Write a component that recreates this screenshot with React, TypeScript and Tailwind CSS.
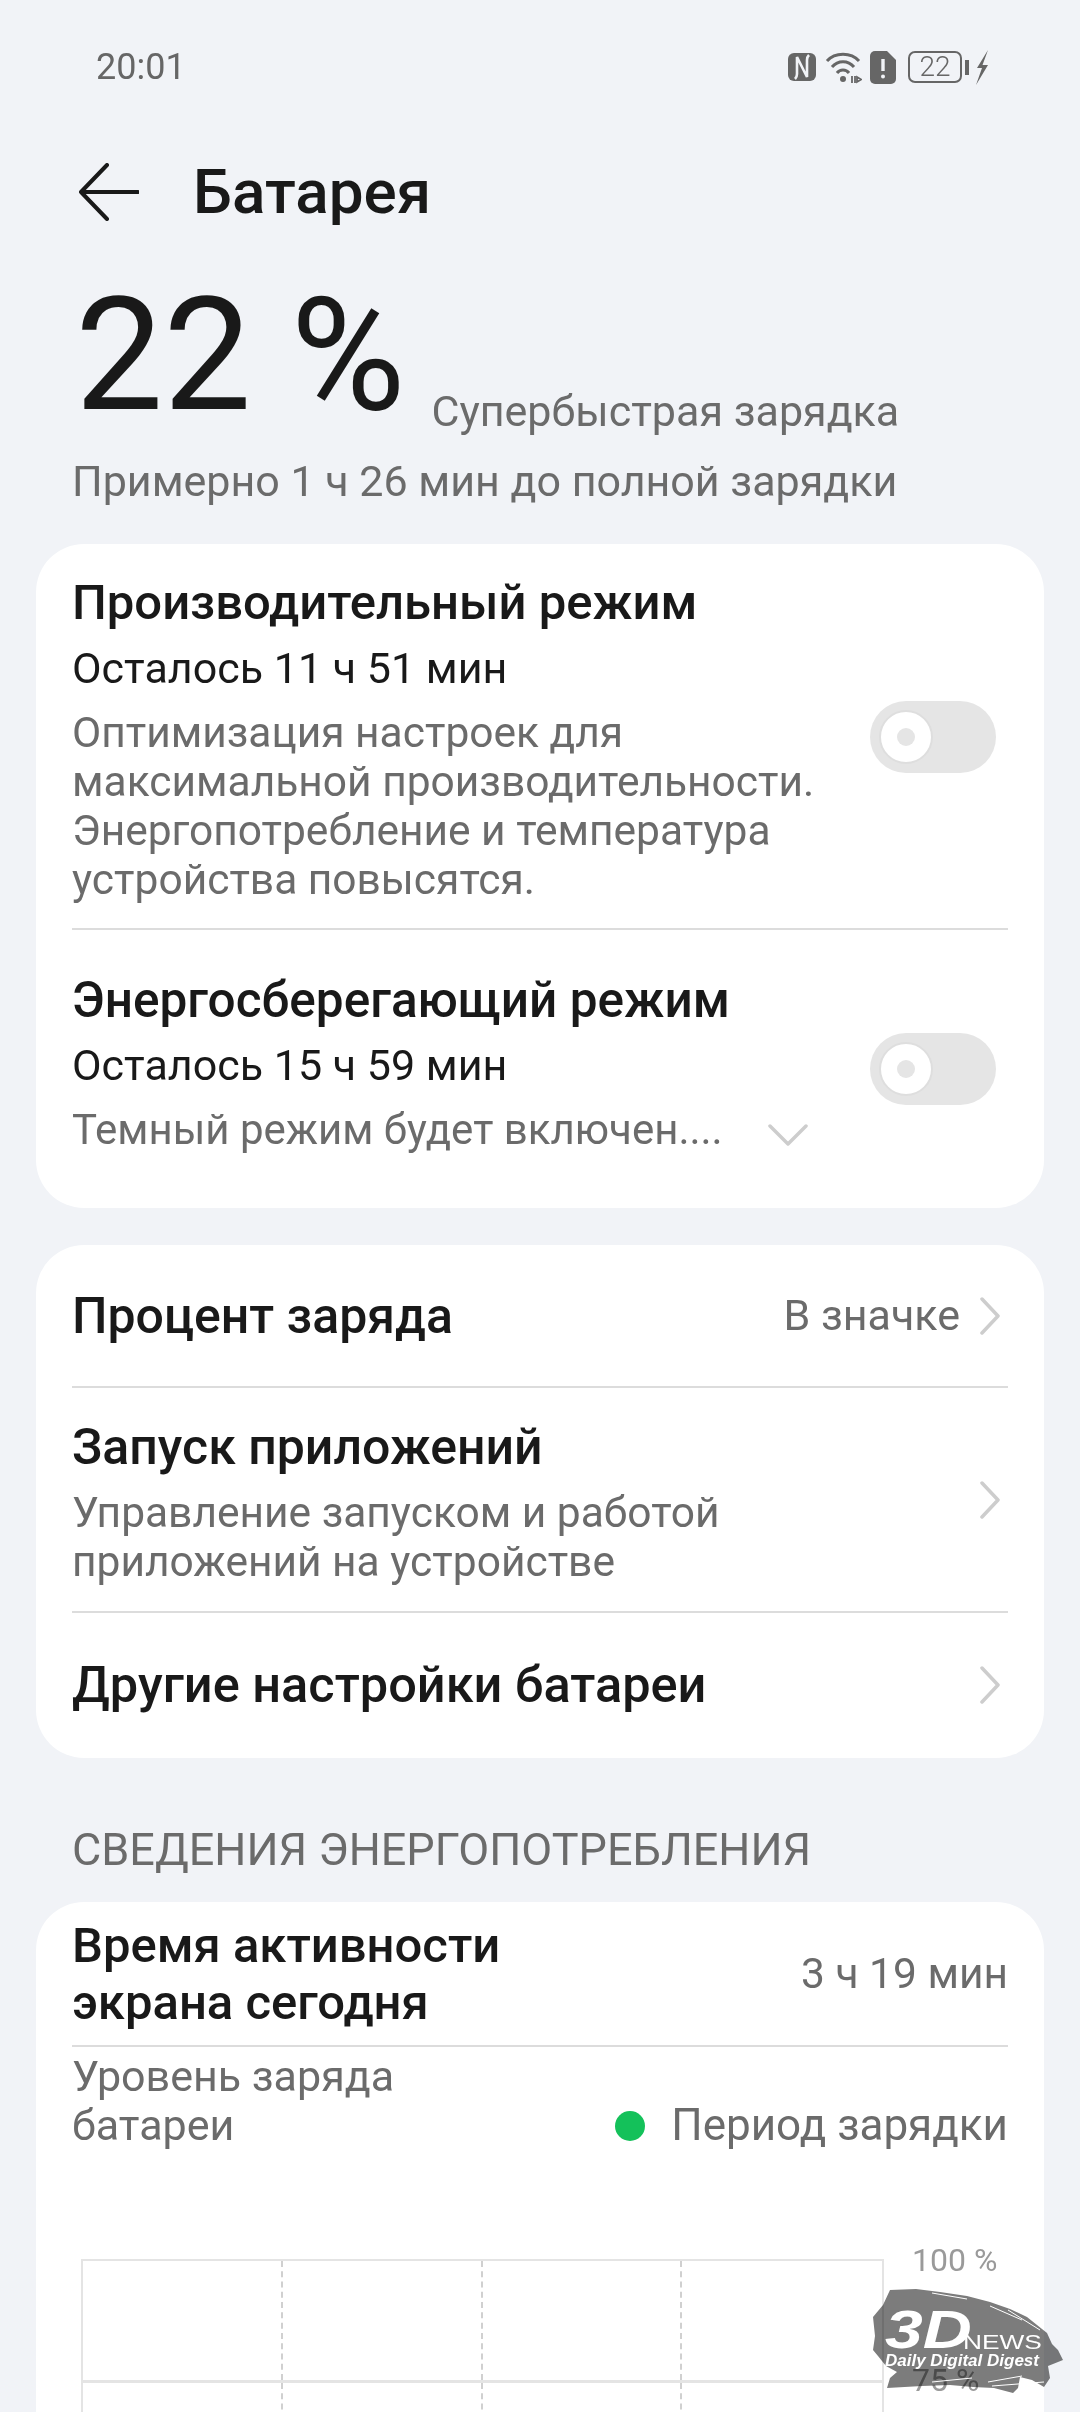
import { ReactNode } from "react";

function Toggle() {
  return (
    <div className="flex h-[72px] w-[126px] shrink-0 items-center rounded-full bg-[#e5e5e5] pl-[9px]">
      <div className="flex h-[54px] w-[54px] items-center justify-center rounded-full border-2 border-[#dedede] bg-white">
        <div className="h-[18px] w-[18px] rounded-full bg-[#e5e5e5]" />
      </div>
    </div>
  );
}

function Chevron() {
  return (
    <svg width="20" height="38" viewBox="0 0 20 38" fill="none" className="shrink-0">
      <path d="M2 2 L18 19 L2 36" stroke="#cdcdcd" strokeWidth="3.5" strokeLinecap="round" strokeLinejoin="round" />
    </svg>
  );
}

function Card({ children, className }: { children: ReactNode; className: string }) {
  return <div className={"mx-9 rounded-[48px] bg-white px-9 " + className}>{children}</div>;
}

function StatusIcons() {
  return (
    <div className="flex items-center">
      {/* nfc */}
      <svg width="30" height="30" viewBox="0 0 30 30" className="mr-[8px]">
        <path d="M7 1 H23 a6 6 0 0 1 6 6 V23 a6 6 0 0 1 -6 6 H7 a6 6 0 0 1 -6 -6 V7 a6 6 0 0 1 6 -6 Z" fill="#666" />
        <path d="M8 27 C10 25 10 24 10 22 V5 L20 25 V8 C20 6 20 5 22 3" fill="none" stroke="#f1f3f7" strokeWidth="2.6" />
      </svg>
      {/* wifi */}
      <svg width="37" height="34" viewBox="0 0 37 34" className="mr-[8px]">
        <path d="M2 11 C10 2 26 2 34 11" fill="none" stroke="#666" strokeWidth="3" />
        <path d="M7 17 C13 10 23 10 29 17" fill="none" stroke="#666" strokeWidth="3" />
        <path d="M12 23 C15 19 21 19 24 23" fill="none" stroke="#666" strokeWidth="3" />
        <circle cx="18" cy="29" r="3" fill="#666" />
        <path d="M27 26 V33 M30 26 V33 M32 27 L36 29.5 L32 32 Z" fill="none" stroke="#666" strokeWidth="1.8" />
      </svg>
      {/* sim alert */}
      <svg width="26" height="33" viewBox="0 0 26 33" className="mr-[12px]">
        <path d="M5 0 H17 L26 9 V28 a5 5 0 0 1 -5 5 H5 a5 5 0 0 1 -5 -5 V5 a5 5 0 0 1 5 -5 Z" fill="#666" />
        <path d="M13 8 V20" stroke="#f1f3f7" strokeWidth="3.4" />
        <circle cx="13" cy="25.5" r="2" fill="#f1f3f7" />
      </svg>
      {/* battery */}
      <div className="mr-[3px] flex h-[32px] w-[54px] items-center justify-center rounded-[7px] border-[2.5px] border-[#666] text-[28px] font-light leading-none text-[#666]">
        22
      </div>
      <div className="mr-[6px] h-[15px] w-[4px] bg-[#666]" />
      <svg width="14" height="35" viewBox="0 0 14 35">
        <path d="M13 0 L2 18 H7 L1 35 L13 15 H7.5 Z" fill="#666" />
      </svg>
    </div>
  );
}

function Watermark() {
  return (
    <div className="absolute left-[872px] top-[2288px] h-[106px] w-[192px]">
      <svg width="192" height="106" viewBox="0 0 192 106" className="absolute left-0 top-0 mix-blend-multiply">
        <path
          d="M18 2 L44 1 L68 4 L95 8 L118 14 L138 21 L155 29 L165 37 L175 45 L180 56 L186 62 L191 72 L176 78 L178 90 L172 99 L160 92 L148 89 L146 100 L141 105 L122 100 L101 99 L78 97 L50 98 L15 100 L18 90 L25 84 L14 78 L6 68 L1 62 L3 48 L1 29 L11 17 Z"
          fill="#7c7c7c"
        />
      </svg>
      <svg width="192" height="106" viewBox="0 0 192 106" fill="none" stroke="white" strokeWidth="1" className="absolute left-0 top-0">
        <path d="M118 18 L150 32 M136 22 L168 42 M60 5 L95 11 M116 94 L150 88 M120 98 L172 94 M60 94 L100 90" />
      </svg>
      <span className="absolute left-[13px] top-[15px] origin-left scale-x-[1.28] font-['Liberation_Sans',sans-serif] text-[53px] font-bold italic leading-none text-white">
        3D
      </span>
      <span className="absolute left-[91px] top-[43px] origin-left scale-x-[1.25] font-['Liberation_Sans',sans-serif] text-[21px] leading-none text-white">
        NEWS
      </span>
      <span className="absolute left-[13px] top-[64px] whitespace-nowrap font-['Liberation_Sans',sans-serif] text-[17px] font-bold italic leading-none text-white">
        Daily Digital Digest
      </span>
    </div>
  );
}

export default function App() {
  return (
    <div className="relative h-[2412px] w-[1080px] overflow-hidden bg-[#f1f3f7] font-['Roboto',sans-serif] text-[#191919]">
      <div className="flex h-[134px] items-center justify-between pl-[96px] pr-[91px]">
        <span className="text-[36px] leading-none text-[#666]">20:01</span>
        <StatusIcons />
      </div>

      <div className="flex h-[116px] items-center pl-[79px]">
        <svg width="60" height="58" viewBox="0 0 60 58" fill="none" className="mr-[54px]">
          <path d="M28 2 L2 29 L28 56 M2 29 H59" stroke="#191919" strokeWidth="4" strokeLinecap="round" strokeLinejoin="round" />
        </svg>
        <h1 className="text-[62px] font-medium leading-none">Батарея</h1>
      </div>

      <div className="flex h-[180px] items-end pl-[75px]">
        <span className="text-[157px] font-normal leading-[150px]">22 %</span>
        <span className="mb-[-6px] ml-[26px] text-[43px] leading-[49px] text-[#6b6b6b]">Супербыстрая зарядка</span>
      </div>
      <p className="pl-[72px] pt-[27px] text-[43px] leading-[49px] text-[#6b6b6b]">Примерно 1 ч 26 мин до полной зарядки</p>

      <Card className="mt-[38px] h-[664px]">
        <div className="h-[386px] border-b-2 border-[#dcdcdc] pt-[32px]">
          <h2 className="text-[49px] font-medium leading-[54px]">Производительный режим</h2>
          <div className="flex items-center justify-between pr-3">
            <div>
              <p className="mt-[14px] text-[43px] leading-[49px]">Осталось 11 ч 51 мин</p>
              <p className="mt-[15px] text-[42.5px] leading-[49px] text-[#6b6b6b]">
                Оптимизация настроек для
                <br />
                максимальной производительности.
                <br />
                Энергопотребление и температура
                <br />
                устройства повысятся.
              </p>
            </div>
            <div className="mt-[-60px]">
              <Toggle />
            </div>
          </div>
        </div>
        <div className="flex items-center justify-between pr-3 pt-[43px]">
          <div>
            <h2 className="text-[49.5px] font-medium leading-[54px]">Энергосберегающий режим</h2>
            <p className="mt-[14px] text-[43px] leading-[49px]">Осталось 15 ч 59 мин</p>
            <div className="mt-[15px] flex items-center">
              <p className="w-[696px] whitespace-nowrap text-[42px] leading-[49px] text-[#6b6b6b]">Темный режим будет включен....</p>
              <svg width="40" height="24" viewBox="0 0 40 24" fill="none" className="mt-[10px]">
                <path d="M2 3 L20 21 L38 3" stroke="#cdcdcd" strokeWidth="3.5" strokeLinecap="round" strokeLinejoin="round" />
              </svg>
            </div>
          </div>
          <div className="mt-[10px]">
            <Toggle />
          </div>
        </div>
      </Card>

      <Card className="mt-[37px] h-[513px]">
        <div className="flex h-[143px] items-center justify-between border-b-2 border-[#dcdcdc] pr-[8px]">
          <span className="text-[50px] font-medium leading-[54px]">Процент заряда</span>
          <div className="flex items-center gap-[20px]">
            <span className="text-[43px] leading-[49px] text-[#6b6b6b]">В значке</span>
            <Chevron />
          </div>
        </div>
        <div className="flex h-[225px] items-center justify-between border-b-2 border-[#dcdcdc] pr-[8px]">
          <div className="pt-[6px]">
            <h2 className="text-[50px] font-medium leading-[54px]">Запуск приложений</h2>
            <p className="mt-[14px] text-[42.5px] leading-[49px] text-[#6b6b6b]">
              Управление запуском и работой
              <br />
              приложений на устройстве
            </p>
          </div>
          <Chevron />
        </div>
        <div className="flex h-[143px] items-center justify-between pr-[8px]">
          <span className="text-[50.5px] font-medium leading-[54px]">Другие настройки батареи</span>
          <Chevron />
        </div>
      </Card>

      <p className="pl-[72px] pt-[67px] text-[45px] leading-[49px] text-[#6b6b6b]">СВЕДЕНИЯ ЭНЕРГОПОТРЕБЛЕНИЯ</p>

      <div className="mx-9 mt-[28px] h-[600px] rounded-t-[48px] bg-white px-9">
        <div className="flex h-[145px] items-center justify-between border-b-2 border-[#dcdcdc]">
          <h2 className="text-[49px] font-medium leading-[57px]">
            Время активности
            <br />
            экрана сегодня
          </h2>
          <span className="text-[42.5px] leading-[49px] text-[#6b6b6b]">3 ч 19 мин</span>
        </div>
        <div className="flex items-end justify-between pt-[5px]">
          <p className="text-[43px] leading-[49px] text-[#6b6b6b]">
            Уровень заряда
            <br />
            батареи
          </p>
          <div className="flex items-center gap-[26px]">
            <div className="h-[30px] w-[30px] rounded-full bg-[#14c15a]" />
            <span className="text-[44px] leading-[49px] text-[#6b6b6b]">Период зарядки</span>
          </div>
        </div>
        <div className="mt-[109px] flex items-start pl-[9px]">
          <div className="w-[803px] shrink-0 border-2 border-b-0 border-[#e4e4e4]">
            {[0, 1].map((row) => (
              <div key={row} className="grid h-[122px] grid-cols-4 border-b-[3px] border-[#e4e4e4]">
                <div className="border-r-2 border-dashed border-[#d0d0d0]" />
                <div className="border-r-2 border-dashed border-[#d0d0d0]" />
                <div className="border-r-2 border-dashed border-[#d0d0d0]" />
                <div />
              </div>
            ))}
          </div>
          <div className="ml-[28px] mt-[-17px] flex flex-col gap-[83px] text-[32px] leading-[37px] text-[#9a9a9a]">
            <span>100 %</span>
            <span>75 %</span>
          </div>
        </div>
      </div>

      <Watermark />
    </div>
  );
}
